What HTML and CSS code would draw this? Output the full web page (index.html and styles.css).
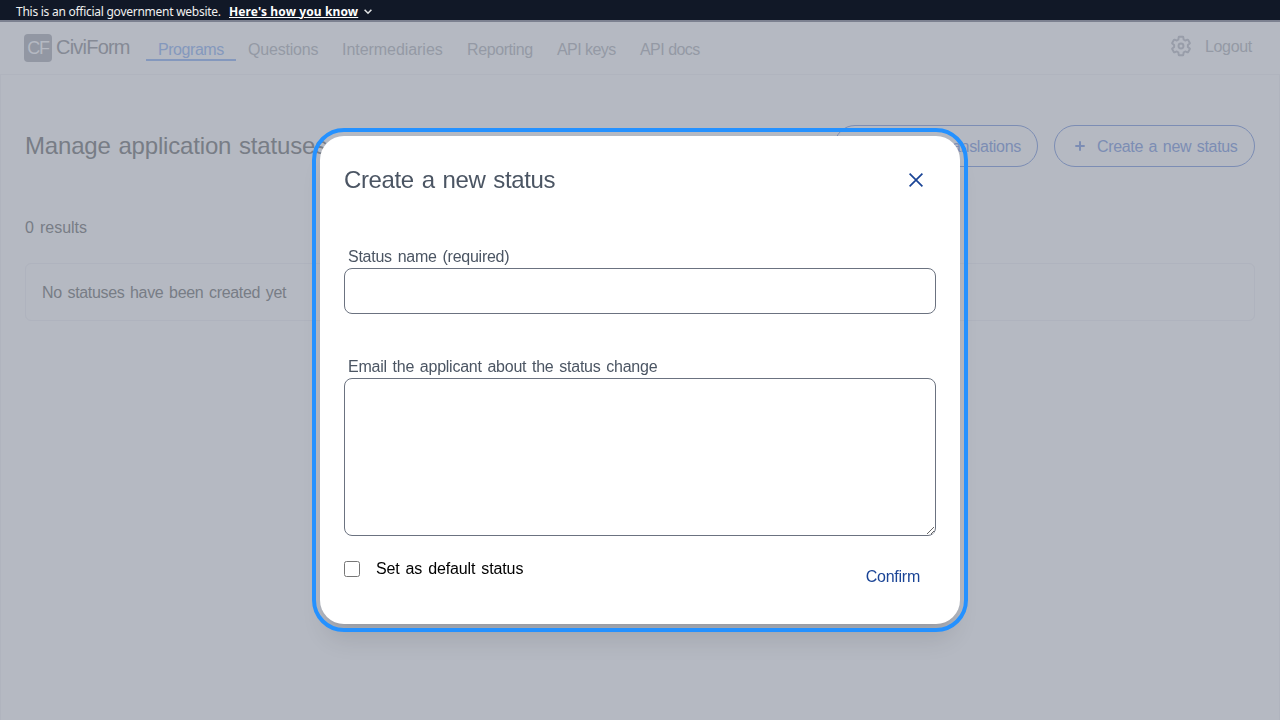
FILE: index.html
```html
<!DOCTYPE html>
<html lang="en">
<head>
<meta charset="utf-8">
<title>Manage application statuses</title>
<link rel="stylesheet" href="styles.css">
</head>
<body>
<div class="banner"><span class="banner-text">This is an official government website.</span><a class="banner-link">Here's how you know</a><svg class="chevron" width="8" height="6" viewBox="0 0 8 6"><path d="M.6.8L4 4.2 7.4.8" fill="none" stroke="#dfe1e2" stroke-width="1.6"/></svg></div>
<header class="header">
  <div class="logo">CF</div><div class="brand">CiviForm</div>
  <nav class="nav">
    <a class="nav-item active"><span class="w-programs">Programs</span></a>
    <a class="nav-item"><span class="w-questions">Questions</span></a>
    <a class="nav-item"><span class="w-inter">Intermediaries</span></a>
    <a class="nav-item"><span class="w-report">Reporting</span></a>
    <a class="nav-item"><span class="w-keys">API keys</span></a>
    <a class="nav-item"><span class="w-docs">API docs</span></a>
  </nav>
  <div class="account">
    <svg width="22" height="22" viewBox="0 0 24 24" fill="none" stroke="#989da9" stroke-width="2.1" stroke-linejoin="round"><path d="M19.43 12.98c.04-.32.07-.64.07-.98 0-.34-.03-.66-.07-.98l2.11-1.65c.19-.15.24-.42.12-.64l-2-3.46c-.09-.16-.26-.25-.44-.25-.06 0-.12.01-.17.03l-2.49 1c-.52-.4-1.08-.73-1.69-.98l-.38-2.65C14.46 2.18 14.25 2 14 2h-4c-.25 0-.46.18-.49.42l-.38 2.65c-.61.25-1.17.59-1.69.98l-2.49-1c-.06-.02-.12-.03-.18-.03-.17 0-.34.09-.43.25l-2 3.46c-.13.22-.07.49.12.64l2.11 1.65c-.04.32-.07.65-.07.98 0 .33.03.66.07.98l-2.11 1.65c-.19.15-.24.42-.12.64l2 3.46c.09.16.26.25.44.25.06 0 .12-.01.17-.03l2.49-1c.52.4 1.08.73 1.69.98l.38 2.65c.03.24.24.42.49.42h4c.25 0 .46-.18.49-.42l.38-2.65c.61-.25 1.17-.59 1.69-.98l2.49 1c.06.02.12.03.18.03.17 0 .34-.09.43-.25l2-3.46c.12-.22.07-.49-.12-.64z"/><circle cx="12" cy="12" r="2.7"/></svg>
    <a class="logout">Logout</a>
  </div>
</header>
<main class="content">
  <div class="title-row">
    <h1 class="title">Manage application statuses</h1>
    <div class="actions">
      <button class="pill translations">Manage translations</button>
      <button class="pill create"><svg class="plus" width="10" height="10" viewBox="0 0 10 10"><path d="M5 .3v9.4M.3 5h9.4" stroke="#7c8db4" stroke-width="2"/></svg><span class="w-create">Create a new status</span></button>
    </div>
  </div>
  <p class="results">0 results</p>
  <div class="empty">No statuses have been created yet</div>
</main>
<div class="overlay">
  <form class="modal">
    <div class="modal-head"><h2 class="modal-title">Create a new status</h2>
      <svg class="close" width="14" height="14" viewBox="0 0 14 14"><path d="M.6.6l12.8 12.8M13.4.6L.6 13.4" stroke="#1a4496" stroke-width="1.7"/></svg></div>
    <label class="label">Status name (required)</label>
    <input class="field" type="text">
    <label class="label email">Email the applicant about the status change</label>
    <textarea class="field area"></textarea>
    <div class="modal-foot"><label class="default"><input class="check" type="checkbox"><span class="w-default">Set as default status</span></label><a class="confirm">Confirm</a></div>
  </form>
</div>
</body>
</html>
```
FILE: styles.css
```css
* { box-sizing: border-box; }
body { margin: 0; height: 720px; overflow: hidden; background: #b5b9c2; font: 16px/24px "Liberation Sans", Arial, sans-serif; word-spacing: 1.6px; letter-spacing: -.25px; color: #787d86; }
.banner { height: 20px; background: #111827; color: #f0f0f0; display: flex; align-items: center; padding: 3px 16px 0; font: 12px/16px "Noto Sans", sans-serif; letter-spacing: 0; word-spacing: 0; white-space: nowrap; }
.banner-text { width: 213px; letter-spacing: -.26px; }
.banner-link { width: 129px; font-weight: 700; text-decoration: underline; letter-spacing: .12px; color: #fff; }
.chevron { margin-left: 6px; margin-top: 1px; }
.header { height: 55px; border-top: 2px solid #7c8190; border-bottom: 1px solid #b0b4be; display: flex; align-items: flex-start; padding: 0 28px 0 24px; color: #9499a5; }
.logo { width: 28px; height: 28px; margin-top: 12px; border-radius: 4px; background: #9297a3; color: #b5b9c2; font-size: 18px; line-height: 29px; text-align: center; letter-spacing: -1.2px; }
.brand { margin: 11px 0 0 4px; width: 90px; font-size: 20px; line-height: 28px; color: #858a95; letter-spacing: -.78px; }
.nav { display: flex; margin-top: 11px; white-space: nowrap; }
.nav-item { height: 28px; padding: 5px 12px 0; }
.nav-item span { display: block; line-height: 24px; height: 21px; }
.active { color: #8498bd; border-bottom: 2px solid #8498bd; }
.w-programs { width: 66px; letter-spacing: -.45px; }
.w-questions { width: 70px; letter-spacing: -.2px; }
.w-inter { width: 101px; letter-spacing: -.05px; }
.w-report { width: 66px; letter-spacing: -.4px; }
.w-keys { width: 59px; letter-spacing: -.6px; word-spacing: .2px; }
.w-docs { width: 60px; letter-spacing: -.57px; word-spacing: .2px; }
.account { margin: 12px 0 0 auto; display: flex; align-items: center; }
.logout { width: 47px; margin-left: 13px; padding-top: 1px; margin-bottom: -1px; letter-spacing: -.35px; }
.content { height: 645px; padding: 50px 24px 0; border: solid #b0b4be; border-width: 0 1px; }
.title-row { display: flex; justify-content: space-between; align-items: center; }
.title { margin: 0; font-size: 24px; line-height: 32px; font-weight: 400; letter-spacing: -.17px; word-spacing: 1.2px; }
.actions { display: flex; gap: 16px; }
.pill { height: 42px; border: 1px solid #7c8db4; border-radius: 21px; background: none; color: #7c8db4; font: inherit; letter-spacing: -.35px; word-spacing: inherit; display: flex; align-items: center; padding: 1px 16px 0; white-space: nowrap; }
.translations { width: 204px; justify-content: flex-end; letter-spacing: -.3px; }
.create { width: 201px; padding-left: 20px; gap: 12px; }
.plus { flex: none; margin-top: -2px; }
.results { margin: 49px 0 23px; letter-spacing: 0; }
.empty { height: 58px; border: 1px solid #afb3be; border-radius: 6px; padding: 17px 16px 15px; letter-spacing: -.34px; }
.overlay { position: fixed; inset: 0; display: flex; justify-content: center; padding-top: 136px; }
.modal { width: 640px; height: 488px; padding: 24px; border-radius: 24px; background: #fff; outline: 4px solid #2491ff; outline-offset: 4px; box-shadow: 0 20px 25px -5px rgba(0,0,0,.1), 0 8px 10px -6px rgba(0,0,0,.1); color: #4b5563; }
.modal-head { height: 40px; display: flex; justify-content: space-between; align-items: center; padding: 0 13px 0 0; }
.modal-title { margin: 0; font-size: 24px; line-height: 32px; font-weight: 400; letter-spacing: -.38px; }
.label { display: block; margin: 45px 4px -1px; white-space: nowrap; letter-spacing: -.25px; }
.field { display: block; width: 592px; height: 46px; margin: 0; border: 1px solid #6b7280; border-radius: 8px; background: #fff; }
.email { margin-top: 41px; }
.area { height: 158px; }
.modal-foot { display: flex; justify-content: space-between; padding: 20px 16px 0 0; }
.default { display: flex; color: #000; }
.check { width: 16px; height: 16px; margin: 5px 16px 0 0; }
.w-default { padding-top: 1px; letter-spacing: -.12px; }
.confirm { color: #1a4496; margin-top: 9px; }
```
